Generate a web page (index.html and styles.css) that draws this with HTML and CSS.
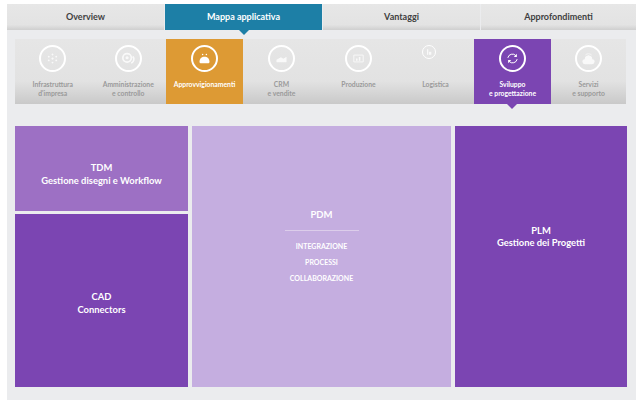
FILE: index.html
```html
<!DOCTYPE html>
<html lang="it">
<head>
<meta charset="utf-8">
<title>Mappa applicativa</title>
<link rel="stylesheet" href="styles.css">
</head>
<body>
<main class="page">
  <nav class="tabs">
    <a class="tab">Overview</a>
    <a class="tab tab-active">Mappa applicativa</a>
    <a class="tab">Vantaggi</a>
    <a class="tab">Approfondimenti</a>
  </nav>
  <nav class="areas">
    <a class="area w-a">
      <span class="ring"><svg viewBox="0 0 24 24" class="ico"><g fill="#fff"><circle cx="12" cy="5.500" r="1.500"/><circle cx="12" cy="18.500" r="1.500"/><circle cx="6" cy="9" r="1.500"/><circle cx="18" cy="9" r="1.500"/><circle cx="6" cy="15" r="1.500"/><circle cx="18" cy="15" r="1.500"/><circle cx="12" cy="12" r="1.800"/></g></svg></span>
      <span class="label">Infrastruttura<br>d'impresa</span>
    </a>
    <a class="area w-a">
      <span class="ring"><svg viewBox="0 0 24 24" class="ico ico-wide"><circle cx="10" cy="11" r="6" fill="none" stroke="#fff" stroke-width="2.400"/><circle cx="10" cy="11" r="2.200" fill="#fff"/><path d="M18 9a6 6 0 0 1-2 9.500" fill="none" stroke="#fff" stroke-width="2.400"/></svg></span>
      <span class="label">Amministrazione<br>e controllo</span>
    </a>
    <a class="area w-b area-orange">
      <span class="ring"><svg viewBox="0 0 24 24" class="ico"><path d="M4 17c0-5 3.500-8 8-8s8 3 8 8c0 1.500-1 2.500-2.500 2.500h-11C5 19.500 4 18.500 4 17z" fill="#fff"/><g fill="#fff"><circle cx="9" cy="5.500" r="1.200"/><circle cx="15" cy="5.500" r="1.200"/></g></svg></span>
      <span class="label">Approvvigionamenti</span>
    </a>
    <a class="area w-b">
      <span class="ring"><svg viewBox="0 0 24 24" class="ico"><path d="M4 18h16v-9l-5 3.500-4-2.500-7 4z" fill="#fff"/></svg></span>
      <span class="label">CRM<br>e vendite</span>
    </a>
    <a class="area w-b">
      <span class="ring"><svg viewBox="0 0 24 24" class="ico"><path d="M4.500 6.500h15v11h-15z" fill="none" stroke="#fff" stroke-width="1.500"/><path d="M8 15.500v-3.500h2.500v3.500zM12.500 15.500V9.500H15v6z" fill="#fff"/></svg></span>
      <span class="label">Produzione</span>
    </a>
    <a class="area w-b area-small">
      <span class="ring ring-small"><svg viewBox="0 0 24 24" class="ico"><path d="M6 4h4v16H6zM12 11h7v9h-7z" fill="#fff"/></svg></span>
      <span class="label">Logistica</span>
    </a>
    <a class="area w-b area-purple">
      <span class="ring"><svg viewBox="0 0 24 24" class="ico"><g fill="none" stroke="#fff" stroke-width="1.600"><path d="M4.500 11a7.500 7.500 0 0 1 13-3.500"/><path d="M19.500 13a7.500 7.500 0 0 1-13 3.500"/></g><path d="M19 4.500v5h-5zM5 19.500v-5h5z" fill="#fff"/></svg></span>
      <span class="label">Sviluppo<br>e progettazione</span>
    </a>
    <a class="area w-c">
      <span class="ring"><svg viewBox="0 0 24 24" class="ico"><path d="M6.500 21a4 4 0 0 1-.5-8 6 6 0 0 1 12 0 4 4 0 0 1-.5 8z" fill="#fff"/><path d="M7 6.500a7 7 0 0 1 10 0M9.500 9a3.500 3.500 0 0 1 5 0" fill="none" stroke="#fff" stroke-width="1.200"/></svg></span>
      <span class="label">Servizi<br>e supporto</span>
    </a>
  </nav>
  <section class="blocks">
    <div class="block tdm"><p>TDM<br>Gestione disegni e Workflow</p></div>
    <div class="block pdm">
      <h2 class="pdm-title">PDM</h2>
      <ul class="pdm-list">
        <li>INTEGRAZIONE</li>
        <li>PROCESSI</li>
        <li>COLLABORAZIONE</li>
      </ul>
    </div>
    <div class="block plm"><p>PLM<br>Gestione dei Progetti</p></div>
    <div class="block cad"><p>CAD<br>Connectors</p></div>
  </section>
</main>
</body>
</html>
```
FILE: styles.css
```css
* { box-sizing: border-box; }
html, body { margin: 0; background: #fff; }
body { font-family: Lato, "Open Sans", "Liberation Sans", sans-serif; }

.page {
  width: 629px;
  height: 396px;
  margin: 4px 0 0 7px;
  background: #ebecee;
}

.tabs { display: flex; gap: 1px; height: 26px; }
.tab {
  position: relative;
  flex: 157px 0 0;
  display: flex;
  align-items: center;
  justify-content: center;
  font-size: 9px;
  font-weight: 700;
  color: #3f3f3f;
  background: linear-gradient(#e7e7e7 0, #e3e3e3 80%, #cfcfcf 100%);
  padding-bottom: 1px;
}
.tab:last-child { flex-basis: 155px; }
.tab-active { background: #1d7fa6; color: #fff; }
.tab-active::after {
  content: "";
  position: absolute;
  left: 74px;
  top: 26px;
  border: 5px solid transparent;
  border-top-color: #1d7fa6;
  border-bottom: 0;
}

.areas {
  display: flex;
  margin: 9px 0 0 8px;
  width: 611px;
  height: 65px;
  background: linear-gradient(#e6e6e6 0, #e2e2e2 65%, #c9c9c9 100%);
}
.area {
  position: relative;
  display: flex;
  flex-direction: column;
  align-items: center;
  padding-top: 6px;
  font-size: 6.800px;
  font-weight: 700;
  color: #9a9a9a;
  text-align: center;
}
.w-a { flex: 75.500px 0 0; }
.w-b { flex: 77px 0 0; }
.w-c { flex: 75px 0 0; }
.area-orange { background: #dd9a34; color: #fff; }
.area-purple { background: #7b45b2; color: #fff; }
.area-purple::after {
  content: "";
  position: absolute;
  left: 33px;
  top: 65px;
  border: 5px solid transparent;
  border-top-color: #7b45b2;
  border-bottom: 0;
}

.ring {
  display: flex;
  align-items: center;
  justify-content: center;
  width: 27px;
  height: 27px;
  border: 2px solid #fff;
  border-radius: 50%;
}
.ring-small {
  width: 14px;
  height: 14px;
  border-width: 1.500px;
  margin: 0 13px 13px 0;
}
.ico { width: 15px; height: 15px; display: block; opacity: .8; }
.ico-wide { width: 17px; height: 17px; }
.area-orange .ico, .area-purple .ico { opacity: 1; }
.ring-small .ico { width: 8px; height: 8px; }

.label { display: block; margin-top: 8px; line-height: 9px; }

.blocks {
  display: grid;
  grid-template-columns: 173px 259px 172px;
  grid-template-rows: 85px 173px;
  column-gap: 4px;
  row-gap: 3px;
  margin: 22px 0 0 8px;
  color: #fff;
}
.block {
  display: flex;
  flex-direction: column;
  align-items: center;
  justify-content: center;
  text-align: center;
  font-size: 9.400px;
  font-weight: 700;
  line-height: 12.500px;
}
.block p { margin: 0; }
.tdm { background: #9d70c4; padding-top: 12px; }
.cad { background: #7b45b2; padding-top: 6px; }
.plm { background: #7b45b2; grid-column: 3; grid-row: 1 / span 2; padding-bottom: 39px; }
.pdm { background: #c5aee0; grid-column: 2; grid-row: 1 / span 2; padding-bottom: 18px; }
.pdm-title {
  margin: 0;
  width: 74px;
  padding-bottom: 9px;
  border-bottom: 1px solid #dccdea;
  font-size: 9.500px;
  font-weight: 700;
  line-height: 12px;
}
.pdm-list {
  list-style: none;
  margin: 7px 0 0;
  padding: 0;
  font-size: 7px;
  font-weight: 700;
  line-height: 16px;
}
```
